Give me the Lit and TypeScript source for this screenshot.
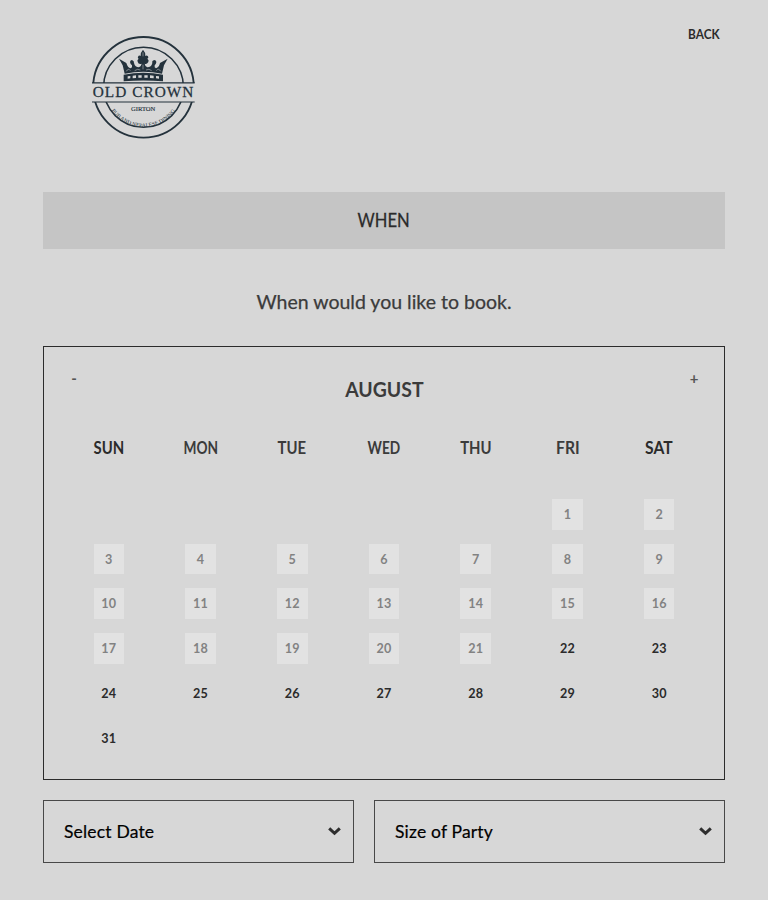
import { LitElement, html, css } from "lit";
import { customElement, property } from "lit/decorators.js";
import { classMap } from "lit/directives/class-map.js";

@customElement("crown-logo")
class CrownLogo extends LitElement {
  static styles = css`
    :host { display: block; width: 108px; height: 106px; }
    svg { display: block; width: 108px; height: 106px; }
    .line { fill: none; stroke: #24323c; }
    .fill { fill: #24323c; }
    .gap { fill: #d7d7d7; }
    text { fill: #24323c; font-family: "Liberation Serif", "Times New Roman", serif; }
  `;
  render() {
    return html`<svg viewBox="30 30 324 318" role="img" aria-label="Old Crown Girton">
      <circle class="line" cx="190.5" cy="187" r="151" stroke-width="5.5"></circle>
      <circle class="line" cx="190.5" cy="187" r="120" stroke-width="4.5"></circle>
      <rect class="gap" x="32" y="174" width="320" height="57"></rect>
      <path class="line" stroke-width="3.5" d="M36 173.500H344M36 231H344"></path>
      <path class="fill" d="M131 169V149Q190 138 249 149V169Q190 164 131 169Z"></path>
      <path class="fill" d="M134 146L128 121L117 101L139 114Q143 128 152 130Q158 128 156 121Q151 118 150 111Q151 105 156 105Q163 108 162 114Q165 127 177 127Q184 123 185 116Q175 119 173 110Q170 105 176 101Q171 98 176 92Q180 91 182 93Q181 82 189 74Q197 82 196 93Q200 90 204 94Q207 99 202 101Q208 105 205 111Q200 119 194 116Q195 124 202 127Q214 127 217 114Q215 107 223 105Q230 106 229 112Q228 118 224 121Q222 128 228 130Q237 127 240 114L263 101L252 121L246 146Q190 134 134 146Z"></path>
      <path class="gap" d="M143 154L151 153V160L143 161ZM158 152L168 151V159L158 160ZM175 151H185V158H175ZM193 151H203V158H193ZM210 151L221 152V160L210 159ZM228 153L237 154V161L228 160Z"></path>
      <path stroke="#d7d7d7" fill="none" stroke-width="1.5" d="M139 139Q145 128 151 137M164 137Q173 130 181 135M198 135Q207 130 215 137M229 137Q236 128 242 139M189 82V94M189 119V133"></path>
      <text x="38" y="216.500" font-size="46" textLength="302" lengthAdjust="spacing" stroke="#24323c" stroke-width=".8">OLD CROWN</text>
      <text x="153" y="257" font-size="19" textLength="73" lengthAdjust="spacingAndGlyphs" stroke="#24323c" stroke-width=".4">GIRTON</text>
      <path id="arc" fill="none" d="M93.500 255A118 118 0 0 0 287.500 255"></path>
      <text font-size="16"><textPath href="#arc" startOffset="2" textLength="222" lengthAdjust="spacingAndGlyphs">PUB AND NEPALESE DINING</textPath></text>
    </svg>`;
  }
}

@customElement("select-box")
class SelectBox extends LitElement {
  @property() label = "";
  static styles = css`
    :host { display: flex; align-items: center; justify-content: space-between; box-sizing: border-box; height: 63px; border: 1px solid #484848; padding: 0 12px 0 20px; color: #000; font-size: 17.500px; letter-spacing: .18px; -webkit-text-stroke: .2px #000; }
    svg { width: 13px; height: 9px; }
    path { fill: none; stroke: #2e2e2e; stroke-width: 3; }
  `;
  render() {
    return html`<span>${this.label}</span><svg viewBox="0 0 13 9"><path d="M1.200 1.300L6.500 6.300L11.800 1.300"></path></svg>`;
  }
}

@customElement("app-root")
class AppRoot extends LitElement {
  static styles = css`
    :host { display: block; box-sizing: border-box; min-height: 900px; background: #d7d7d7; color: #3b3b3b; padding: 0 43px; font-family: "Trebuchet MS", Lato, sans-serif; }
    header { display: flex; justify-content: space-between; height: 192px; box-sizing: border-box; padding: 35px 5px 0 47px; }
    .back { font-size: 13px; line-height: 16px; font-weight: 700; color: #2b2b2b; margin-top: -9px; transform: scaleX(.91); transform-origin: right; }
    .title { height: 57px; line-height: 55px; background: #c5c5c5; text-align: center; font-size: 19.500px; color: #2b2b2b; -webkit-text-stroke: .3px; }
    .title span { display: inline-block; transform: scaleX(.85); }
    .lead { margin: 40px 0 31px; height: 26px; line-height: 26px; text-align: center; font-size: 19.500px; -webkit-text-stroke: .25px; }
    .calendar { box-sizing: border-box; height: 434px; border: 1px solid #2b2b2b; padding: 19px; }
    .month { display: flex; justify-content: space-between; height: 57px; font-weight: 700; }
    .step { width: 22px; text-align: center; font-size: 15px; line-height: 24px; color: #555; }
    .name { font-size: 21px; line-height: 46px; transform: scaleX(.925); }
    .days { display: grid; grid-template-columns: repeat(7, 1fr); }
    .heads { height: 69px; font-weight: 700; font-size: 16.500px; line-height: 51px; text-align: center; }
    .heads span { transform: scaleX(.9); }
    .heads .wide { transform: scaleX(.83); }
    .heads .narrow { transform: scaleX(.95); }
    .end { color: #2b2b2b; }
    .grid { grid-auto-rows: 44.700px; justify-items: center; align-items: center; }
    .day { width: 30.500px; height: 30.500px; line-height: 31px; text-align: center; font-size: 12.600px; font-weight: 700; letter-spacing: .2px; color: #2b2b2b; }
    .first { grid-column-start: 6; }
    .past { background: #e2e2e2; color: #828282; }
    .fields { display: grid; grid-template-columns: 311px 351px; gap: 20px; margin-top: 20px; }
  `;
  render() {
    const heads = ["SUN", "MON", "TUE", "WED", "THU", "FRI", "SAT"];
    return html`
      <header><crown-logo></crown-logo><span class="back">BACK</span></header>
      <div class="title"><span>WHEN</span></div>
      <div class="lead">When would you like to book.</div>
      <section class="calendar">
        <div class="month"><span class="step">-</span><span class="name">AUGUST</span><span class="step">+</span></div>
        <div class="days heads">${heads.map((h, i) => html`<span class=${classMap({ end: i % 6 === 0, wide: i === 1 || i === 3, narrow: i > 4 })}>${h}</span>`)}</div>
        <div class="days grid">${Array.from({ length: 31 }, (_, i) => html`<span class=${classMap({ day: true, first: i === 0, past: i < 21 })}>${i + 1}</span>`)}</div>
      </section>
      <div class="fields"><select-box label="Select Date"></select-box><select-box label="Size of Party"></select-box></div>`;
  }
}
